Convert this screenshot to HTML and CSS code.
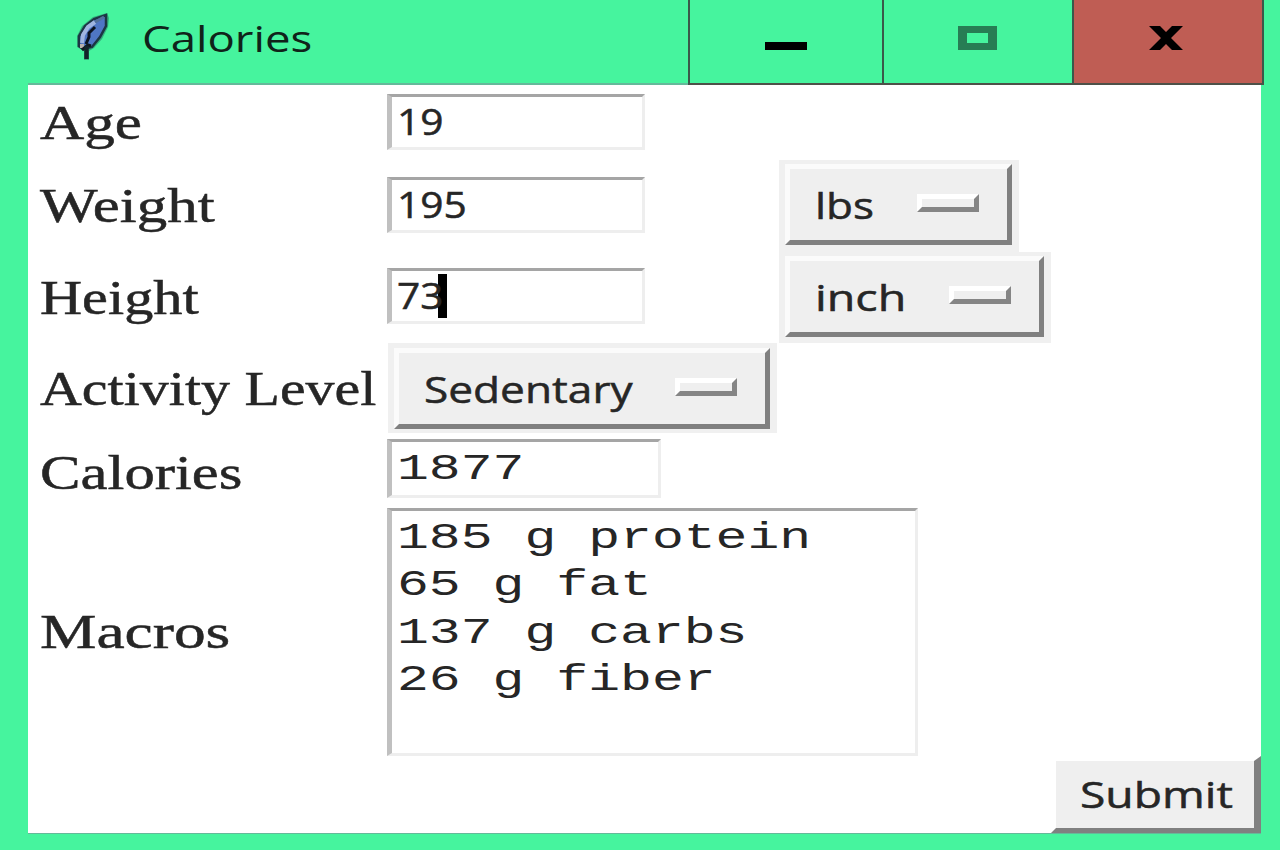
FILE: index.html
```html
<!DOCTYPE html>
<html lang="en">
<head>
<meta charset="utf-8">
<title>Calories</title>
<link rel="stylesheet" href="styles.css">
</head>
<body>
<div class="window">
  <header class="titlebar">
    <svg class="feather" width="40" height="52" viewBox="0 0 40 52">
      <path d="M13 48 L13 39 L6 35 L6 24 L11 14 L22 5 L36 1 L38 6 L37 15 L31 27 L23 36 L18 39 L18 48 Z" fill="#1d5a55" opacity=".45"/>
      <path d="M12 37 L8 34 L8 24 L14 14 L23 7 L35 3 L35 14 L29 25 L21 35 Z" fill="#4f76c4" stroke="#1c3544" stroke-width="2.500"/>
      <path d="M11 31 L12 23 L17 15 L24 10" fill="none" stroke="#9fb4e0" stroke-width="4"/>
      <path d="M24 10 L33 5" fill="none" stroke="#52719c" stroke-width="3"/>
      <path d="M15 32 L18 25 L18 21 L24 15" fill="none" stroke="#0b1220" stroke-width="3"/>
      <path d="M9 34 L13 34" stroke="#b8b0ad" stroke-width="4"/>
      <path d="M11 38 L17 33 L20 34" fill="none" stroke="#101820" stroke-width="3"/>
      <path d="M15.500 34 L15.500 47" stroke="#13232a" stroke-width="4.500"/>
    </svg>
    <h1 class="title"><span class="wide title-text">Calories</span></h1>
    <div class="controls">
      <div class="control minimize"><svg width="42" height="8"><rect width="42" height="8" fill="#000"/></svg></div>
      <div class="control maximize"><svg width="39" height="24"><path fill-rule="evenodd" d="M0 0H39V24H0Z M9 7V17H30V7Z" fill="#277d54"/></svg></div>
      <div class="control close"><svg width="36" height="24" viewBox="0 0 36 24"><path d="M1 0H12L18 6L24 0H35L23 12L35 24H24L18 18L12 24H1L13 12Z" fill="#000"/></svg></div>
    </div>
  </header>
  <main class="form">
    <div class="label r-age"><span class="wide s-age">Age</span></div>
    <div class="field entry e-age"><span class="wide number">19</span></div>

    <div class="label r-weight"><span class="wide s-weight">Weight</span></div>
    <div class="field entry e-weight"><span class="wide number">195</span></div>
    <div class="option o-lbs"><div class="raised"><span class="wide s-lbs">lbs</span><i class="indicator"></i></div></div>

    <div class="label r-height"><span class="wide s-height">Height</span></div>
    <div class="field entry e-height"><span class="wide number">73</span><i class="caret"></i></div>
    <div class="option o-inch"><div class="raised"><span class="wide s-inch">inch</span><i class="indicator"></i></div></div>

    <div class="label r-activity"><span class="wide s-activity">Activity Level</span></div>
    <div class="option o-activity"><div class="raised"><span class="wide s-sedentary">Sedentary</span><i class="indicator"></i></div></div>

    <div class="label r-calories"><span class="wide s-calories">Calories</span></div>
    <div class="field output e-calories"><span class="wide mono">1877</span></div>

    <div class="label r-macros"><span class="wide s-macros">Macros</span></div>
    <div class="field output e-macros"><span class="wide mono">185 g protein<br>65 g fat<br>137 g carbs<br>26 g fiber</span></div>

    <div class="submit"><span class="wide s-submit">Submit</span></div>
  </main>
</div>
</body>
</html>
```
FILE: styles.css
```css
* { box-sizing: border-box; }

body {
  margin: 0;
  background: #46f49e;
  color: #262626;
  font: 37px/50px "Open Sans", "Noto Sans", sans-serif;
}

.window {
  width: 1280px;
  height: 850px;
  padding: 0 19px 16px 28px;
  overflow: hidden;
}

/* Text is stretched horizontally; each string sets its own factor. */
.wide {
  display: block;
  width: max-content;
  white-space: nowrap;
  transform-origin: 0 50%;
  -webkit-text-stroke: .5px currentColor;
}

.titlebar {
  display: flex;
  height: 85px;
  margin-right: -3px;
  border-bottom: 2px solid #65b99a;
}
.feather { margin: 12px 0 0 43px; flex: none; }
.title { margin: 13px 0 0 31px; font: inherit; color: #10231a; width: 200px; }
.title-text { transform: scaleX(1.23); -webkit-text-stroke-width: 0; }
.controls {
  display: grid;
  grid-template-columns: 194px 190px 190px;
  height: 85px;
  margin-left: auto;
  border-left: 2px solid #3b584a;
  border-bottom: 2px solid #4d5148;
}
.control { border-right: 2px solid #3b584a; }
.control svg { display: block; }
.minimize svg { margin: 42px 0 0 75px; }
.maximize svg { margin: 26px 0 0 74px; }
.close { background: #bf5d54; }
.close svg { margin: 26px 0 0 74px; }

.form {
  display: grid;
  grid-template-columns: 358px 393px 272px 1fr;
  grid-template-rows: 75px 92px 91px 91px 70px 255px 75px;
  height: 749px;
  background: #fff;
  border-bottom: 1px solid #65b99a;
}

.label {
  grid-column: 1;
  padding-left: 12px;
  font: 49px/56px "Liberation Serif", serif;
}
.r-age { grid-row: 1; padding-top: 10px; }
.r-weight { grid-row: 2; padding-top: 18px; }
.r-height { grid-row: 3; padding-top: 18px; }
.r-activity { grid-row: 4; padding-top: 18px; }
.r-calories { grid-row: 5; padding-top: 11px; }
.r-macros { grid-row: 6; padding-top: 100px; }
.s-age { transform: scaleX(1.25); }
.s-weight { transform: scaleX(1.245); }
.s-height { transform: scaleX(1.19); }
.s-activity { transform: scaleX(1.183); }
.s-calories { transform: scaleX(1.24); }
.s-macros { transform: scaleX(1.295); }

.field {
  grid-column: 2;
  border-style: solid;
  border-width: 3px 3px 3px 5px;
  border-color: #a5a5a5 #eee #eee #c0c0c0;
  margin-left: 1px;
  padding-left: 5px;
  background: #fff;
}
.entry { display: flex; width: 258px; height: 56px; }
.e-age { grid-row: 1; margin-top: 9px; }
.e-weight { grid-row: 2; margin-top: 17px; }
.e-height { grid-row: 3; margin-top: 16px; }
.number { margin-top: -1px; transform: scaleX(1.1); }
.caret { width: 9px; height: 44px; margin: 3px 0 0 -1px; background: #000; }

.output { font: 37px/47.300px "Liberation Mono", monospace; }
.e-calories { grid-row: 5; width: 274px; height: 59px; margin-top: 5px; padding-top: 4px; }
.e-macros { grid-column: 2 / 4; grid-row: 6; width: 531px; height: 248px; margin-top: 4px; padding-top: 4px; }
.mono { transform: scaleX(1.435); -webkit-text-stroke-width: 0; }

.option { background: #f0f0f0; }
.o-lbs { grid-column: 3; grid-row: 2; width: 240px; padding: 4px 7px 7px 6px; }
.o-inch { grid-column: 3; grid-row: 3; padding: 4px 7px 6px 6px; }
.o-activity { grid-column: 2; grid-row: 4; width: 389px; height: 90px; margin-left: 2px; padding: 5px 7px 4px 6px; }
.raised {
  display: flex;
  justify-content: space-between;
  height: 81px;
  padding: 11px 28px 0 25px;
  border: 5px solid;
  border-color: #fbfbfb #808080 #808080 #fbfbfb;
  background: #efefef;
}
.indicator {
  width: 62px;
  height: 18px;
  margin-top: 14px;
  border: 5px solid;
  border-color: #fff #858585 #858585 #fff;
}
.s-lbs { transform: scaleX(1.19); }
.s-inch { transform: scaleX(1.26); }
.s-sedentary { transform: scaleX(1.195); }

.submit {
  grid-column: 4;
  grid-row: 7;
  justify-self: end;
  width: 210px;
  height: 77px;
  margin-top: -3px;
  padding: 8px 0 0 24px;
  border: 5px solid;
  border-right-width: 7px;
  border-color: #fff #808080 #808080 #fff;
  background: #efefef;
}
.s-submit { transform: scaleX(1.25); }
```
